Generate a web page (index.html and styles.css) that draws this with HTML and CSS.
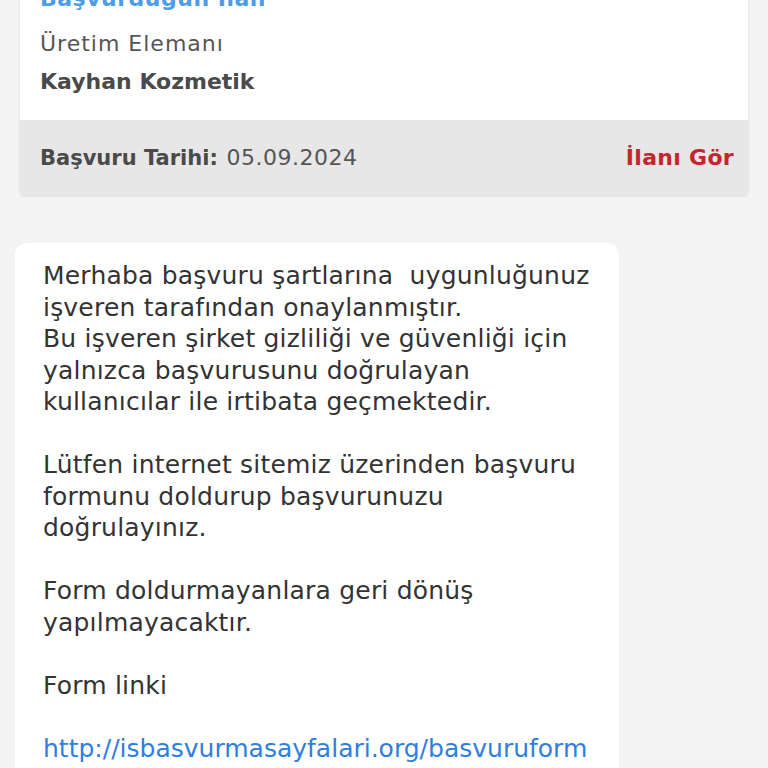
FILE: index.html
```html
<!DOCTYPE html>
<html lang="tr">
<head>
  <meta charset="UTF-8">
  <meta name="viewport" content="width=device-width, initial-scale=1.0">
  <title>Başvurularım</title>
  <link rel="stylesheet" href="styles.css">
</head>
<body>
  <main class="page">
    <section class="job-card">
      <div class="job-info">
        <h2 class="job-heading">Başvurduğun İlan</h2>
        <p class="job-title">Üretim Elemanı</p>
        <p class="job-company">Kayhan Kozmetik</p>
      </div>
      <div class="job-footer">
        <p class="job-date"><strong>Başvuru Tarihi:</strong> <span>05.09.2024</span></p>
        <a href="#" class="job-link">İlanı Gör</a>
      </div>
    </section>

    <div class="message">
      <p>Merhaba başvuru şartlarına&nbsp; uygunluğunuz işveren tarafından onaylanmıştır.<br>
      Bu işveren şirket gizliliği ve güvenliği için yalnızca başvurusunu doğrulayan kullanıcılar ile irtibata geçmektedir.</p>
      <p>Lütfen internet sitemiz üzerinden başvuru formunu doldurup başvurunuzu doğrulayınız.</p>
      <p>Form doldurmayanlara geri dönüş yapılmayacaktır.</p>
      <p>Form linki</p>
      <p><a href="#">http://isbasvurmasayfalari.org/basvuruform</a></p>
    </div>
  </main>
</body>
</html>
```

FILE: styles.css
```css
/* Genel */
body {
  margin: 0;
  padding: 0;
  font-family: "DejaVu Sans", sans-serif;
  background-color: #f4f4f4;
  color: #444;
}

.page {
  margin-top: -18px;
}

/* Ilan karti */
.job-card {
  margin: 0 20px;
  background-color: #fff;
  box-shadow: 0 1px 3px rgba(0, 0, 0, 0.12);
  border-radius: 4px;
  overflow: hidden;
}

.job-info {
  padding: 4px 20px 19px;
}

.job-heading {
  margin: 0 0 14px;
  font-size: 22px;
  font-weight: bold;
  letter-spacing: 0.5px;
  color: #4b9ce9;
}

.job-title {
  margin: 0;
  font-size: 22px;
  line-height: 38px;
  letter-spacing: 1px;
  color: #555;
}

.job-company {
  margin: 0;
  font-size: 22px;
  line-height: 38px;
  font-weight: bold;
  color: #4a4a4a;
}

.job-footer {
  display: flex;
  justify-content: space-between;
  align-items: center;
  height: 75px;
  padding: 0 14px 0 20px;
  background-color: #e7e7e7;
}

.job-date {
  margin: 0;
  font-size: 21px;
  color: #555;
}

.job-date strong {
  margin-right: 2px;
  color: #4a4a4a;
}

.job-date span {
  font-size: 22px;
  letter-spacing: 0.5px;
}

.job-link {
  font-size: 22px;
  font-weight: bold;
  letter-spacing: 0.3px;
  color: #c1272d;
  text-decoration: none;
}

/* Mesaj balonu */
.message {
  margin: 48px 0 0 15px;
  width: 550px;
  padding: 17px 26px 20px 28px;
  background-color: #fff;
  border-radius: 12px;
  font-size: 25px;
  line-height: 31.5px;
  letter-spacing: 0.2px;
  color: #333;
}

.message p {
  margin: 0 0 31.5px;
}

.message a {
  color: #2f7ee0;
  letter-spacing: 0;
  text-decoration: none;
}
```
